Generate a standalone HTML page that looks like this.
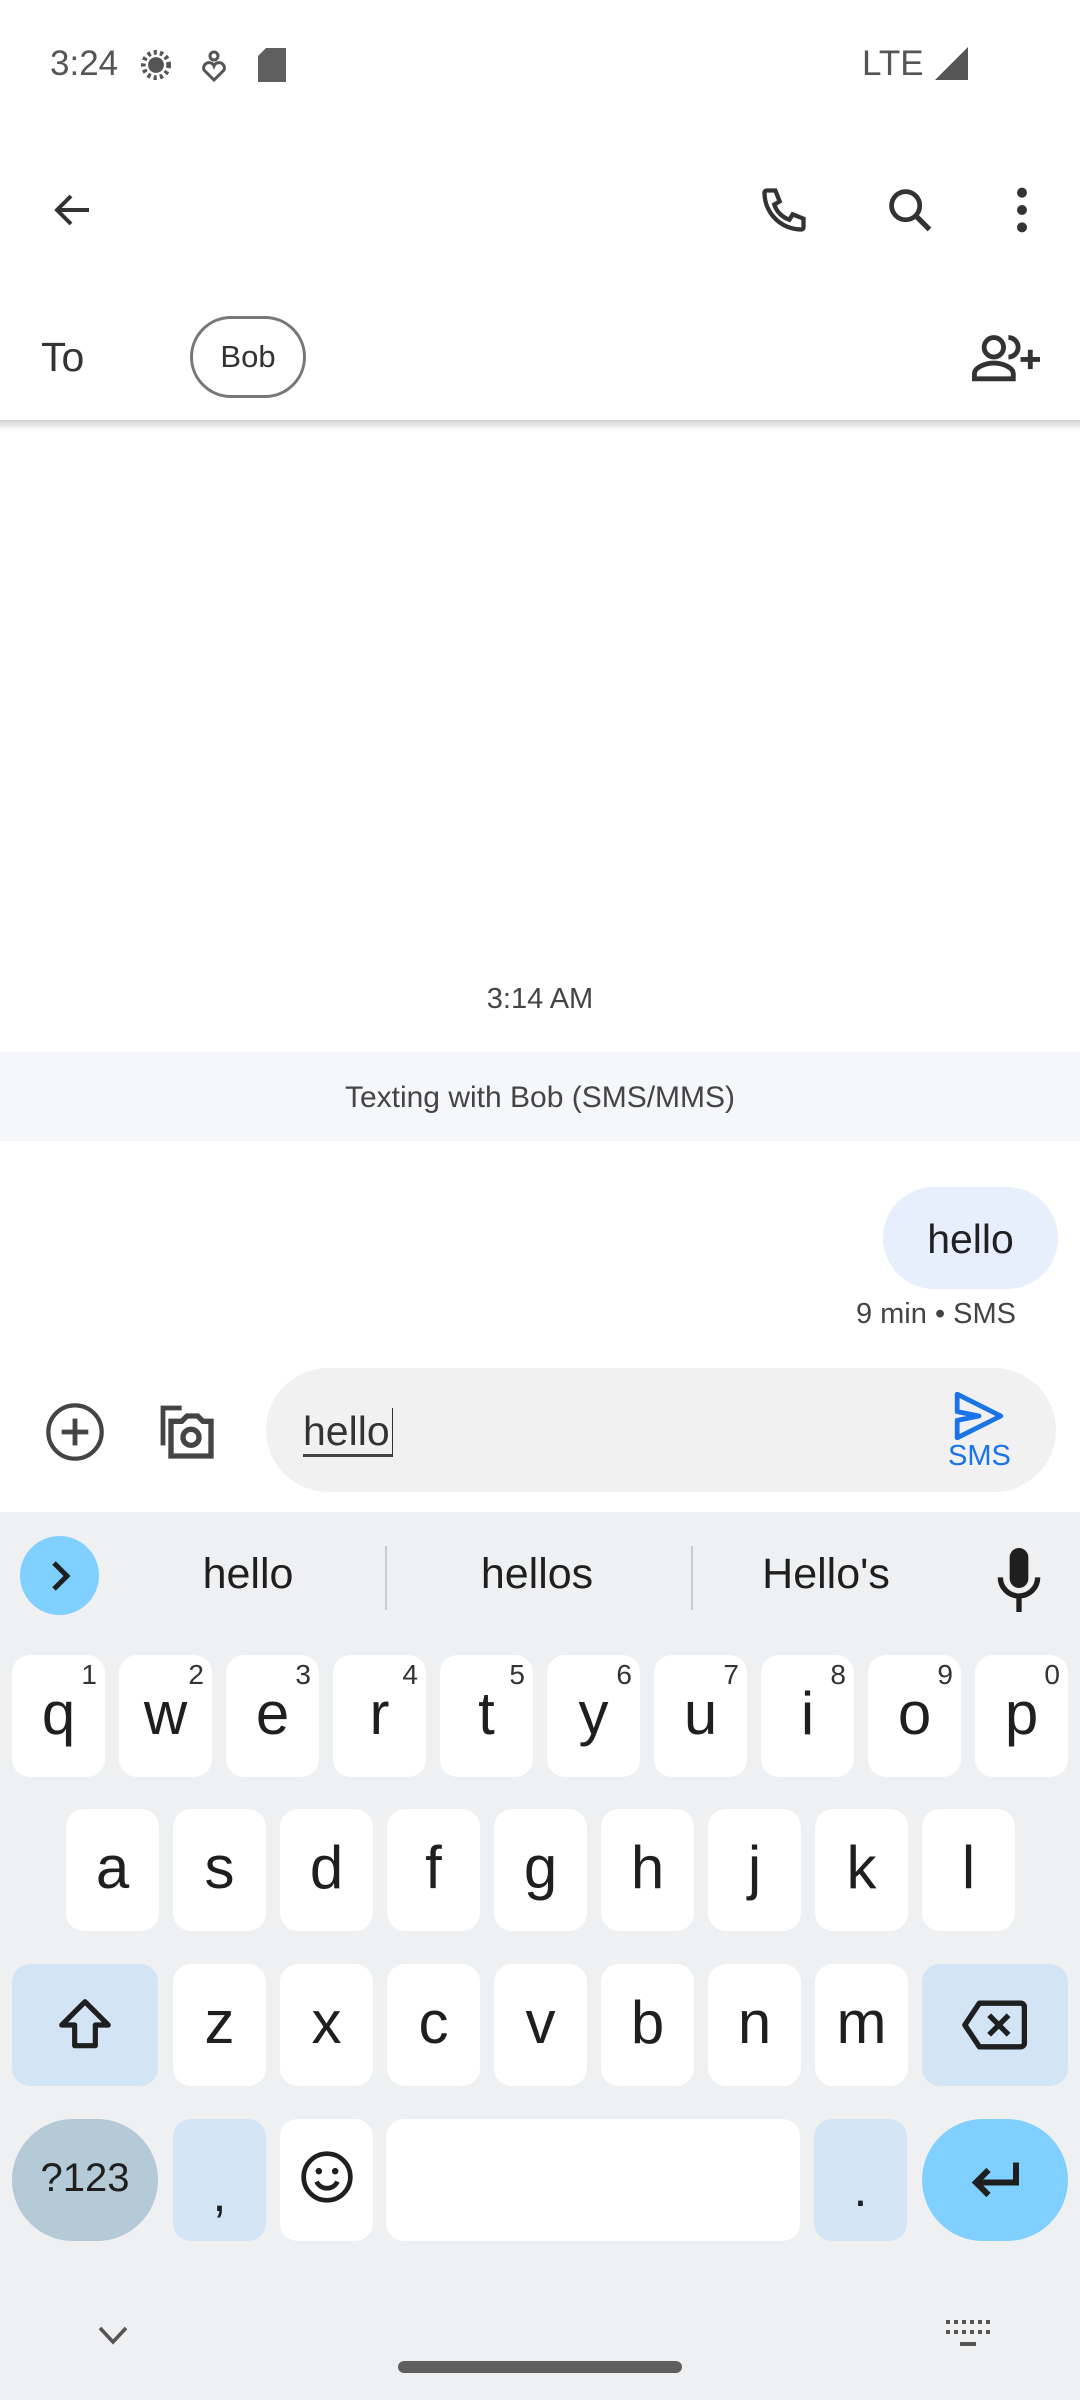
<!DOCTYPE html>
<html><head><meta charset="utf-8"><style>
*{margin:0;padding:0;box-sizing:border-box}
body{width:1080px;height:2400px;position:relative;background:#fff;font-family:"Liberation Sans",sans-serif;overflow:hidden;color:#202124}
.a{position:absolute}
.k{position:absolute;background:#fff;border-radius:18px;width:93px;height:122px;font-size:60px;color:#1f1f1f;text-align:center;line-height:118px}
.k sup{position:absolute;right:8px;top:6px;font-size:28px;line-height:28px;color:#333}
.t{text-align:center}
</style></head><body>
<div class="a" style="left:50px;top:44px;font-size:35px;color:#555">3:24</div>
<svg class="a" style="left:137px;top:46px" width="38" height="38" viewBox="0 0 24 24"><circle cx="12" cy="12" r="8" fill="none" stroke="#555" stroke-width="3" stroke-dasharray="2 2"/><circle cx="12" cy="12" r="5" fill="#555"/></svg>
<svg class="a" style="left:200px;top:50px" width="28" height="32" viewBox="0 0 14 16"><circle cx="7" cy="3" r="2" fill="none" stroke="#555" stroke-width="1.5"/><path d="M7 15 L2 10 A2.5 2.5 0 0 1 7 8 A2.5 2.5 0 0 1 12 10 Z" fill="none" stroke="#555" stroke-width="1.5"/></svg>
<svg class="a" style="left:258px;top:48px" width="28" height="34" viewBox="0 0 14 17"><path d="M4 0H14V17H0V4Z" fill="#5f5f5f"/></svg>
<div class="a" style="left:862px;top:44px;font-size:35px;color:#555">LTE</div>
<svg class="a" style="left:935px;top:47px" width="33" height="33" viewBox="0 0 10 10"><path d="M10 0V10H0Z" fill="#555"/></svg>
<svg class="a" style="left:49px;top:186px" width="48" height="48" viewBox="0 0 24 24"><path d="M20 12H4M11 5L4 12L11 19" fill="none" stroke="#333" stroke-width="2"/></svg>
<svg class="a" style="left:758px;top:184px" width="52" height="52" viewBox="0 0 24 24"><path d="M4 3h4l2 5-2.5 1.5a11 11 0 0 0 7 7L16 14l5 2v4a1 1 0 0 1-1 1A17 17 0 0 1 3 4a1 1 0 0 1 1-1z" fill="none" stroke="#333" stroke-width="2"/></svg>
<svg class="a" style="left:884px;top:184px" width="52" height="52" viewBox="0 0 24 24"><circle cx="10" cy="10" r="6.5" fill="none" stroke="#333" stroke-width="2.2"/><path d="M15 15l6 6" stroke="#333" stroke-width="2.4"/></svg>
<svg class="a" style="left:1004px;top:184px" width="36" height="52" viewBox="0 0 12 24"><circle cx="6" cy="4" r="2.3" fill="#333"/><circle cx="6" cy="12" r="2.3" fill="#333"/><circle cx="6" cy="20" r="2.3" fill="#333"/></svg>
<div class="a" style="left:41px;top:334px;font-size:41px;color:#333">To</div>
<div class="a t" style="left:190px;top:316px;width:116px;height:82px;border:3px solid #777;border-radius:41px;font-size:31px;line-height:76px;color:#333">Bob</div>
<svg class="a" style="left:972px;top:332px" width="68" height="50" viewBox="0 0 28 20"><circle cx="9" cy="6" r="4" fill="none" stroke="#333" stroke-width="2"/><path d="M1 19v-2c0-3 5-4.5 8-4.5s8 1.5 8 4.5v2z" fill="none" stroke="#333" stroke-width="2"/><path d="M15 2a4 4 0 0 1 0 8" fill="none" stroke="#333" stroke-width="2"/><path d="M24 7v8M20 11h8" stroke="#333" stroke-width="2"/></svg>
<div class="a" style="left:0;top:420px;width:1080px;height:10px;background:linear-gradient(#cfcfcf,#fff)"></div>
<div class="a t" style="left:0;top:983px;width:1080px;font-size:29px;color:#444">3:14 AM</div>
<div class="a t" style="left:0;top:1052px;width:1080px;height:89px;background:#f6f7fb;font-size:30px;line-height:92px;color:#444">Texting with Bob (SMS/MMS)</div>
<div class="a t" style="left:883px;top:1187px;width:175px;height:102px;border-radius:51px;background:#e8effc;font-size:41px;line-height:104px;color:#202124">hello</div>
<div class="a" style="right:64px;top:1298px;font-size:29px;color:#444">9 min • SMS</div>
<svg class="a" style="left:43px;top:1400px" width="64" height="64" viewBox="0 0 24 24"><circle cx="12" cy="12" r="10" fill="none" stroke="#444" stroke-width="1.6"/><path d="M12 7v10M7 12h10" stroke="#444" stroke-width="1.8"/></svg>
<svg class="a" style="left:155px;top:1400px" width="64" height="64" viewBox="0 0 24 24"><path d="M3 17V3h7" fill="none" stroke="#444" stroke-width="1.8"/><path d="M6 8h4l2-2h4l2 2h3v13H6z" fill="none" stroke="#444" stroke-width="2"/><circle cx="13.5" cy="14" r="3" fill="none" stroke="#444" stroke-width="2"/></svg>
<div class="a" style="left:266px;top:1368px;width:790px;height:124px;border-radius:62px;background:#f1f1f2"></div>
<div class="a" style="left:303px;top:1408px;font-size:41px;color:#333;border-bottom:3px solid #444;line-height:46px;padding-right:2px;border-right:1px solid #333">hello</div>
<svg class="a" style="left:952px;top:1392px" width="54" height="48" viewBox="0 0 24 22"><path d="M2 1L22 11L2 21V13L12 11L2 9Z" fill="none" stroke="#1a73e8" stroke-width="2.2" stroke-linejoin="round"/></svg>
<div class="a" style="left:948px;top:1440px;font-size:29px;color:#1a73e8">SMS</div>
<div class="a" style="left:0;top:1512px;width:1080px;height:888px;background:#eff0f2"></div>
<div class="a" style="left:20px;top:1536px;width:79px;height:79px;border-radius:50%;background:#7fcfff"></div>
<svg class="a" style="left:44px;top:1559px" width="32" height="34" viewBox="0 0 16 17"><path d="M5 2l6.5 6.5L5 15" fill="none" stroke="#1f1f1f" stroke-width="2.5"/></svg>
<div class="a t" style="left:148px;top:1550px;width:200px;font-size:43px;color:#1f1f1f">hello</div>
<div class="a" style="left:385px;top:1546px;width:2px;height:64px;background:#ccc"></div>
<div class="a t" style="left:437px;top:1550px;width:200px;font-size:43px;color:#1f1f1f">hellos</div>
<div class="a" style="left:691px;top:1546px;width:2px;height:64px;background:#ccc"></div>
<div class="a t" style="left:726px;top:1550px;width:200px;font-size:43px;color:#1f1f1f">Hello's</div>
<svg class="a" style="left:996px;top:1548px" width="46" height="64" viewBox="0 0 16 24"><rect x="4.5" y="0" width="7" height="15" rx="3.5" fill="#1f1f1f"/><path d="M1 11a7 7 0 0 0 14 0M8 18v6" fill="none" stroke="#1f1f1f" stroke-width="2"/></svg>
<div class="k" style="left:12px;top:1655px">q<sup>1</sup></div>
<div class="k" style="left:119px;top:1655px">w<sup>2</sup></div>
<div class="k" style="left:226px;top:1655px">e<sup>3</sup></div>
<div class="k" style="left:333px;top:1655px">r<sup>4</sup></div>
<div class="k" style="left:440px;top:1655px">t<sup>5</sup></div>
<div class="k" style="left:547px;top:1655px">y<sup>6</sup></div>
<div class="k" style="left:654px;top:1655px">u<sup>7</sup></div>
<div class="k" style="left:761px;top:1655px">i<sup>8</sup></div>
<div class="k" style="left:868px;top:1655px">o<sup>9</sup></div>
<div class="k" style="left:975px;top:1655px">p<sup>0</sup></div>
<div class="k" style="left:66px;top:1809px">a</div>
<div class="k" style="left:173px;top:1809px">s</div>
<div class="k" style="left:280px;top:1809px">d</div>
<div class="k" style="left:387px;top:1809px">f</div>
<div class="k" style="left:494px;top:1809px">g</div>
<div class="k" style="left:601px;top:1809px">h</div>
<div class="k" style="left:708px;top:1809px">j</div>
<div class="k" style="left:815px;top:1809px">k</div>
<div class="k" style="left:922px;top:1809px">l</div>
<div class="k" style="left:12px;top:1964px;width:146px;background:#d3e5f4"></div>
<svg class="a" style="left:54px;top:1993px" width="62" height="64" viewBox="0 0 24 24"><path d="M12 3L3 12h5v8h8v-8h5z" fill="none" stroke="#1f1f1f" stroke-width="2" stroke-linejoin="round"/></svg>
<div class="k" style="left:173px;top:1964px">z</div>
<div class="k" style="left:280px;top:1964px">x</div>
<div class="k" style="left:387px;top:1964px">c</div>
<div class="k" style="left:494px;top:1964px">v</div>
<div class="k" style="left:601px;top:1964px">b</div>
<div class="k" style="left:708px;top:1964px">n</div>
<div class="k" style="left:815px;top:1964px">m</div>
<div class="k" style="left:922px;top:1964px;width:146px;background:#d3e5f4"></div>
<svg class="a" style="left:960px;top:1997px" width="68" height="56" viewBox="0 0 28 22"><path d="M8 2H25a1.5 1.5 0 0 1 1.5 1.5v15A1.5 1.5 0 0 1 25 20H8L2 11Z" fill="none" stroke="#1f1f1f" stroke-width="2.2" stroke-linejoin="round"/><path d="M12 7l8 8M20 7l-8 8" stroke="#1f1f1f" stroke-width="2.2"/></svg>
<div class="k" style="left:12px;top:2119px;width:146px;border-radius:61px;background:#b4cad6;font-size:40px">?123</div>
<div class="k" style="left:173px;top:2119px;background:#d3e5f4;font-size:50px;line-height:150px">,</div>
<div class="k" style="left:280px;top:2119px"><svg style="margin-top:30px" width="56" height="56" viewBox="0 0 24 24"><circle cx="12" cy="12" r="10" fill="none" stroke="#1f1f1f" stroke-width="2"/><circle cx="8.5" cy="9.5" r="1.4" fill="#1f1f1f"/><circle cx="15.5" cy="9.5" r="1.4" fill="#1f1f1f"/><path d="M7.5 14a5 5 0 0 0 9 0" fill="none" stroke="#1f1f1f" stroke-width="2"/></svg></div>
<div class="k" style="left:386px;top:2119px;width:414px"></div>
<div class="k" style="left:814px;top:2119px;background:#d3e5f4;font-size:50px;line-height:140px">.</div>
<div class="k" style="left:922px;top:2119px;width:146px;border-radius:61px;background:#7fcfff"></div>
<svg class="a" style="left:966px;top:2152px" width="60" height="56" viewBox="0 0 24 22"><path d="M20 4v8H4M9 7l-5 5 5 5" fill="none" stroke="#1f1f1f" stroke-width="2.4"/></svg>
<svg class="a" style="left:98px;top:2326px" width="30" height="20" viewBox="0 0 15 10"><path d="M1 1l6.5 7L14 1" fill="none" stroke="#555" stroke-width="1.8"/></svg>
<svg class="a" style="left:946px;top:2320px" width="44" height="30" viewBox="0 0 22 15"><g fill="#555"><rect x="0" y="0" width="2" height="2"/><rect x="4" y="0" width="2" height="2"/><rect x="8" y="0" width="2" height="2"/><rect x="12" y="0" width="2" height="2"/><rect x="16" y="0" width="2" height="2"/><rect x="20" y="0" width="2" height="2"/><rect x="0" y="5" width="2" height="2"/><rect x="4" y="5" width="2" height="2"/><rect x="8" y="5" width="2" height="2"/><rect x="12" y="5" width="2" height="2"/><rect x="16" y="5" width="2" height="2"/><rect x="20" y="5" width="2" height="2"/><rect x="7" y="11" width="8" height="2"/></g></svg>
<div class="a" style="left:398px;top:2361px;width:284px;height:12px;border-radius:6px;background:#5f5f5f"></div>
</body></html>
